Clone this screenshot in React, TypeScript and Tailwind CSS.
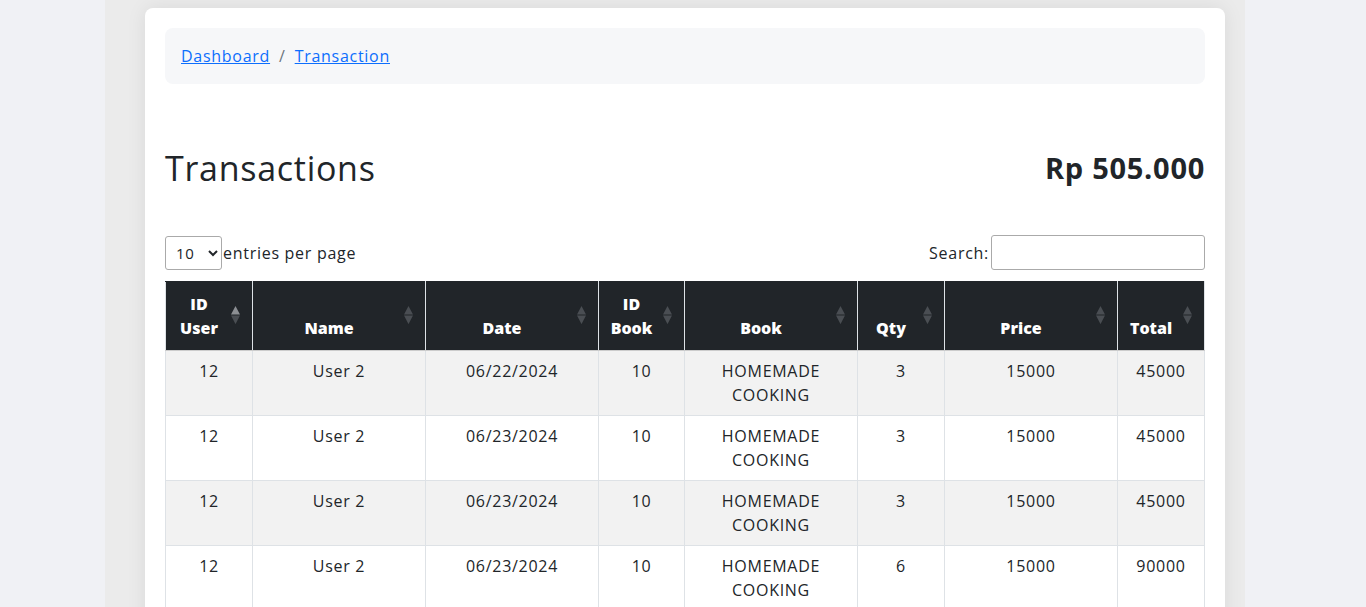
const rows = [
  { idUser: 12, name: "User 2", date: "06/22/2024", idBook: 10, book: "HOMEMADE COOKING", qty: 3, price: 15000, total: 45000 },
  { idUser: 12, name: "User 2", date: "06/23/2024", idBook: 10, book: "HOMEMADE COOKING", qty: 3, price: 15000, total: 45000 },
  { idUser: 12, name: "User 2", date: "06/23/2024", idBook: 10, book: "HOMEMADE COOKING", qty: 3, price: 15000, total: 45000 },
  { idUser: 12, name: "User 2", date: "06/23/2024", idBook: 10, book: "HOMEMADE COOKING", qty: 6, price: 15000, total: 90000 },
];

const columns = [
  { label: "ID User", width: "w-[87px]", active: true },
  { label: "Name", width: "w-[173px]" },
  { label: "Date", width: "w-[173px]" },
  { label: "ID Book", width: "w-[86px]" },
  { label: "Book", width: "w-[173px]" },
  { label: "Qty", width: "w-[87px]" },
  { label: "Price", width: "w-[173px]" },
  { label: "Total", width: "w-[87px]" },
];

function SortIcon({ active }: { active?: boolean }) {
  return (
    <svg width="9" height="18" viewBox="0 0 9 18" className="absolute right-[12px] top-1/2 -translate-y-[55%]">
      <polygon points="4.5,0 9,8.5 0,8.5" fill={active ? "#8c8f93" : "#4a4e53"} />
      <polygon points="4.5,18 9,9.5 0,9.5" fill="#4a4e53" />
    </svg>
  );
}

export default function App() {
  return (
    <div className="min-h-screen bg-[#f0f1f5] flex text-[#212529] font-['Open_Sans',sans-serif] tracking-[0.045em]">
      <div className="w-[105px] shrink-0" />
      <div className="w-[1140px] shrink-0 bg-[#ebebeb] pl-[40px] pr-[20px] pt-[8px] pb-6">
        <div className="bg-white rounded-lg shadow-[0_0_20px_rgba(0,0,0,0.08)] p-[20px]">
          {/* Breadcrumb */}
          <nav className="bg-[#f6f7f9] rounded-lg h-[56px] px-[16px] flex items-center gap-[9px] text-[16px]">
            <a href="#" className="text-[#0d6efd] underline">Dashboard</a>
            <span className="text-[#6c757d]">/</span>
            <a href="#" className="text-[#0d6efd] underline">Transaction</a>
          </nav>

          {/* Heading */}
          <div className="flex justify-between items-center mt-[64px]">
            <h2 className="text-[34px] font-medium leading-[40px]">Transactions</h2>
            <h2 className="text-[29px] font-bold leading-[40px]">Rp 505.000</h2>
          </div>

          {/* Controls */}
          <div className="flex justify-between items-center mt-[47px] mb-[11px]">
            <div className="flex items-center text-[16px]">
              <select className="w-[57px] h-[34px] border border-[#aaa] rounded-[3px] pl-[6px] text-[15px] bg-white">
                <option>10</option>
                <option>25</option>
                <option>50</option>
              </select>
              <span className="ml-[1px]">entries per page</span>
            </div>
            <div className="flex items-center text-[16px]">
              <label className="mr-[2px]">Search:</label>
              <input className="w-[214px] h-[35px] border border-[#aaa] rounded-[3px] px-2" />
            </div>
          </div>

          {/* Table */}
          <table className="w-full table-fixed border-collapse text-[16px] leading-[24px]">
            <colgroup>
              {columns.map((c) => (
                <col key={c.label} className={c.width} />
              ))}
            </colgroup>
            <thead>
              <tr className="bg-[#212529] text-white">
                {columns.map((c) => (
                  <th
                    key={c.label}
                    className="relative align-bottom font-extrabold tracking-normal text-center pl-[8px] pr-[28px] pt-[10px] pb-[10px] border border-[#dee2e6] border-t-[#212529] border-b-[#ccc]"
                  >
                    {c.label.split(" ").map((w) => (
                      <div key={w}>{w}</div>
                    ))}
                    <SortIcon active={c.active} />
                  </th>
                ))}
              </tr>
            </thead>
            <tbody>
              {rows.map((r, i) => (
                <tr key={i} className={i % 2 === 0 ? "bg-[#f2f2f2]" : "bg-white"}>
                  {[r.idUser, r.name, r.date, r.idBook, r.book, r.qty, r.price, r.total].map((v, j) => (
                    <td key={j} className="align-top text-center px-[8px] pt-[8px] pb-[8px] border border-[#dee2e6] h-[65px]">
                      {j === 4 ? (
                        <>
                          <div>HOMEMADE</div>
                          <div>COOKING</div>
                        </>
                      ) : (
                        v
                      )}
                    </td>
                  ))}
                </tr>
              ))}
            </tbody>
          </table>
        </div>
      </div>
    </div>
  );
}
